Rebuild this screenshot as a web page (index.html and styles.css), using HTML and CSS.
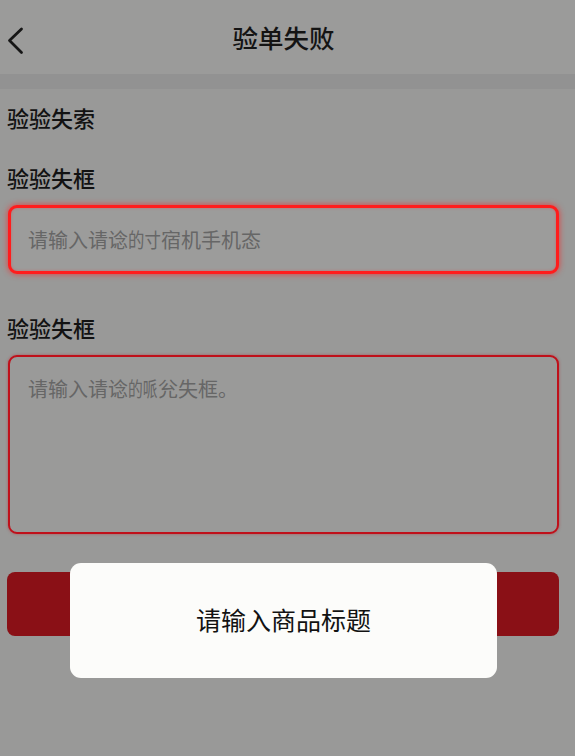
FILE: index.html
```html
<!DOCTYPE html>
<html lang="zh-CN">
<head>
<meta charset="utf-8">
<title>验单失败</title>
<link rel="stylesheet" href="styles.css">
</head>
<body>
<div class="page">
  <header class="topbar">
    <span class="back">
      <svg width="18" height="28" viewBox="0 0 18 28"><polyline points="14.5,2 2.5,13.5 14.5,25.5" fill="none" stroke="#161616" stroke-width="2.8" stroke-linecap="round" stroke-linejoin="round"/></svg>
    </span>
    <h1 class="title">验单失败</h1>
  </header>
  <div class="band"></div>
  <main class="form">
    <div class="label first">验验失索</div>
    <div class="label second">验验失框</div>
    <div class="field field-error">
      <span class="placeholder">请输入请谂<span class="narrow wide-pair"><span class="squeeze">的寸</span></span>宿机手机态</span>
    </div>
    <div class="label third">验验失框</div>
    <div class="area">
      <span class="placeholder">请输入请谂<span class="narrow"><span class="squeeze">的哌</span></span>兊失框。</span>
    </div>
    <div class="submit"></div>
  </main>
  <div class="toast">请输入商品标题</div>
</div>
</body>
</html>
```
FILE: styles.css
```css
html, body {
  margin: 0;
  padding: 0;
  background: #999998;
}
body {
  font-family: "Noto Sans CJK SC", "Noto Sans", sans-serif;
  color: #111;
}
.page {
  position: relative;
  width: 575px;
  height: 756px;
  overflow: hidden;
  background: #999998;
}
.topbar {
  position: relative;
  height: 74px;
  display: flex;
  align-items: center;
  justify-content: center;
  background: #9b9b9a;
}
.back {
  position: absolute;
  left: 7px;
  top: 27px;
  width: 18px;
  height: 28px;
}
.title {
  margin: 0 8px 0 0;
  font-size: 25.5px;
  font-weight: 500;
  line-height: 30px;
  color: #141414;
}
.band {
  height: 15px;
  background: #929292;
}
.form {
  display: flex;
  flex-direction: column;
  padding: 13px 16px 0 7px;
}
.label {
  font-size: 22px;
  line-height: 30px;
  font-weight: 500;
  color: #121212;
}
.second {
  margin-top: 30px;
}
.field {
  margin-top: 13px;
  margin-left: 1px;
  height: 69px;
  box-sizing: border-box;
  border: 3px solid #ff1c1c;
  border-radius: 9px;
  box-shadow: 0 0 6px rgba(255, 30, 30, 0.75), inset 0 0 3px rgba(255, 40, 40, 0.4);
  display: flex;
  align-items: center;
  padding-left: 17px;
  background: #9c9c9b;
}
.placeholder {
  font-size: 20px;
  line-height: 28px;
  color: #666666;
  white-space: nowrap;
}
.narrow {
  display: inline-block;
  width: 30px;
  vertical-align: top;
  overflow: visible;
}
.wide-pair {
  width: 33px;
}
.squeeze {
  display: inline-block;
  transform: scaleX(0.74);
  transform-origin: left center;
}
.wide-pair .squeeze {
  transform: scaleX(0.82);
}
.third {
  margin-top: 38px;
}
.area {
  margin-top: 13px;
  margin-left: 1px;
  height: 179px;
  box-sizing: border-box;
  border: 2px solid #bf101a;
  border-radius: 9px;
  box-shadow: 0 0 3px rgba(190, 20, 30, 0.5);
  padding: 18px 0 0 18px;
  background: #9a9a99;
}
.submit {
  margin-top: 38px;
  height: 64px;
  border-radius: 8px;
  background: #8a1016;
}
.toast {
  position: absolute;
  left: 70px;
  top: 563px;
  width: 427px;
  height: 115px;
  box-sizing: border-box;
  border-radius: 11px;
  background: #fcfcfa;
  display: flex;
  align-items: center;
  justify-content: center;
  font-size: 25px;
  line-height: 30px;
  color: #121212;
  padding-bottom: 4px;
}
```
